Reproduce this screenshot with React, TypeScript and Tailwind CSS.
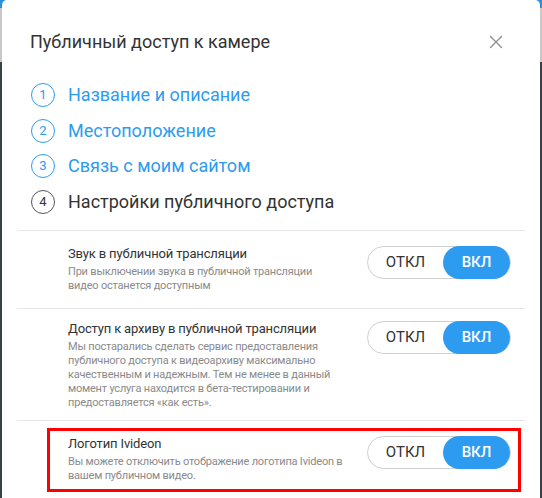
import React from 'react';

const steps = [
  { n: 1, label: 'Название и описание', done: true },
  { n: 2, label: 'Местоположение', done: true },
  { n: 3, label: 'Связь с моим сайтом', done: true },
  { n: 4, label: 'Настройки публичного доступа', done: false },
];

const Toggle = () => (
  <div className="mt-[1px] flex h-[33px] w-[144px] shrink-0 items-center rounded-full border border-[#cfcfcf] bg-white">
    <span className="flex-1 text-center text-[15px] leading-none text-[#333]">ОТКЛ</span>
    <span className="flex h-[33px] w-[67px] items-center justify-center rounded-full bg-[#2d9bf0] text-[15px] font-medium leading-none text-white">
      ВКЛ
    </span>
  </div>
);

const Setting = ({ title, text }: { title: string; text: string[] }) => (
  <div className="flex items-start justify-between">
    <div>
      <div className="text-[13px] leading-[18px] tracking-[-0.15px] text-[#333]">{title}</div>
      <div className="mt-[2px] text-[11px] leading-[14px] tracking-[-0.2px] text-[#8a8a8a]">
        {text.map((t, i) => (
          <div key={i}>{t}</div>
        ))}
      </div>
    </div>
    <Toggle />
  </div>
);

export default function App() {
  return (
    <div
      className="h-[498px] w-[542px] overflow-hidden bg-[linear-gradient(to_bottom,#2b8fe0_0,#2b8fe0_8px,#c9c9c9_8px,#c9c9c9_62px,#3b3f48_62px)] px-[2px]"
      style={{ fontFamily: 'Roboto, "Noto Sans", sans-serif' }}
    >
      <div className="h-full rounded-t-[5px] bg-white">
        <div className="flex items-center justify-between pl-[28px] pr-[37px] pt-[30px]">
          <h2 className="text-[18px] leading-[24px] text-[#333]">Публичный доступ к камере</h2>
          <svg width="14" height="14" viewBox="0 0 14 14" className="text-[#8c9099]">
            <path d="M1.5 1.5l11 11M12.5 1.5l-11 11" stroke="currentColor" strokeWidth="1.4" strokeLinecap="round" />
          </svg>
        </div>

        <div className="mt-[29px] flex flex-col gap-[11.5px] pl-[29px]">
          {steps.map((s) => (
            <div key={s.n} className="flex items-center gap-[13px]">
              <span
                className={
                  s.done
                    ? 'flex h-[24px] w-[24px] items-center justify-center rounded-full border border-[#2d9bf0] text-[13px] text-[#2d9bf0]'
                    : 'flex h-[24px] w-[24px] items-center justify-center rounded-full border border-[#555] text-[13px] text-[#333]'
                }
              >
                {s.n}
              </span>
              <span className={s.done ? 'text-[18px] leading-[24px] text-[#2d9bf0]' : 'text-[18px] leading-[24px] text-[#333]'}>
                {s.label}
              </span>
            </div>
          ))}
        </div>

        <div className="mx-[15px] mt-[16px] border-t border-[#e6e6e6]">
          <div className="pb-[15px] pl-[51px] pr-[14px] pt-[14px]">
            <Setting
              title="Звук в публичной трансляции"
              text={['При выключении звука в публичной трансляции', 'видео останется доступным']}
            />
          </div>
          <div className="border-t border-[#e6e6e6] pb-[10px] pl-[51px] pr-[14px] pt-[11px]">
            <Setting
              title="Доступ к архиву в публичной трансляции"
              text={[
                'Мы постарались сделать сервис предоставления',
                'публичного доступа к видеоархиву максимально',
                'качественным и надежным. Тем не менее в данный',
                'момент услуга находится в бета-тестировании и',
                'предоставляется «как есть».',
              ]}
            />
          </div>
          <div className="border-t border-[#e6e6e6] pt-[7px]">
            <div className="ml-[30px] mr-[4px] border-[3px] border-[#ff0000] pb-[6px] pl-[18px] pr-[7px] pt-[4px]">
              <Setting
                title="Логотип Ivideon"
                text={['Вы можете отключить отображение логотипа Ivideon в', 'вашем публичном видео.']}
              />
            </div>
          </div>
        </div>
      </div>
    </div>
  );
}
